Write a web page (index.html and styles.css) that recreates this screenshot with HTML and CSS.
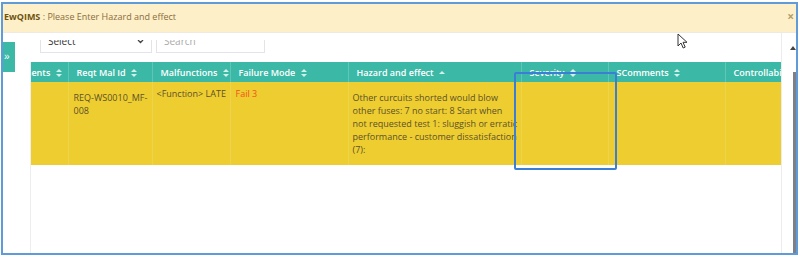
FILE: index.html
```html
<!DOCTYPE html>
<html lang="en">
<head>
    <meta charset="UTF-8">
    <meta name="viewport" content="width=device-width, initial-scale=1.0">
    <title>EwQIMS - Hazard Analysis</title>
    <link rel="stylesheet" href="styles.css">
</head>
<body>
    <div class="frame">
        <div class="page">
            <!-- side menu toggle -->
            <div class="sidebar">
                <button class="toggle">&raquo;</button>
            </div>

            <div class="main">
                <div class="filters">
                    <div class="select">
                        <span>Select</span>
                        <svg width="7" height="5" viewBox="0 0 7 5"><path d="M1 1l2.5 2.5L6 1" fill="none" stroke="#444" stroke-width="1.3"/></svg>
                    </div>
                    <div class="search">Search</div>
                </div>

                <div class="grid-wrap">
                    <table class="grid">
                        <colgroup>
                            <col style="width:87px">
                            <col style="width:84px">
                            <col style="width:78px">
                            <col style="width:118px">
                            <col style="width:173px">
                            <col style="width:87px">
                            <col style="width:117px">
                            <col style="width:110px">
                        </colgroup>
                        <thead>
                            <tr>
                                <th>Requirements <i class="sort"></i></th>
                                <th>Reqt Mal Id <i class="sort"></i></th>
                                <th>Malfunctions <i class="sort"></i></th>
                                <th>Failure Mode <i class="sort"></i></th>
                                <th>Hazard and effect <i class="sort asc"></i></th>
                                <th>Severity <i class="sort"></i></th>
                                <th>SComments <i class="sort"></i></th>
                                <th>Controllability <i class="sort"></i></th>
                            </tr>
                        </thead>
                        <tbody>
                            <tr class="warn">
                                <td></td>
                                <td class="id">REQ-WS0010_MF-008</td>
                                <td>&lt;Function&gt; LATE</td>
                                <td class="fail">Fail 3</td>
                                <td class="hazard">Other curcuits shorted would blow other fuses: 7 no start: 8 Start when not requested test 1: sluggish or erratic performance - customer dissatisfaction (7):</td>
                                <td></td>
                                <td></td>
                                <td></td>
                            </tr>
                        </tbody>
                    </table>
                </div>
            </div>

            <div class="scroll">
                <span class="arrow"></span>
                <span class="thumb"></span>
            </div>
        </div>

        <!-- validation message -->
        <div class="toast">
            <b>EwQIMS</b> : Please Enter Hazard and effect
            <span class="close">&times;</span>
        </div>

        <!-- cell selection -->
        <div class="marquee"></div>

        <svg class="cursor" width="11" height="16" viewBox="0 0 11 16">
            <path d="M1 1v12l3-3 2.2 5 2-0.9-2.2-4.8H10z" fill="#fff" stroke="#333" stroke-width="1" stroke-linejoin="round"/>
        </svg>
    </div>
</body>
</html>
```

FILE: styles.css
```css
body {
    margin: 0;
    background: #fff;
    font-family: "Open Sans", Arial, sans-serif;
    color: #333;
}
.frame {
    position: relative;
    margin: 2px 2px 0 1px;
    height: 249px;
    border: 2px solid #5f9bd8;
    overflow: hidden;
}
.page {
    display: flex;
    height: 100%;
}
.sidebar {
    width: 27px;
    flex: none;
}
.toggle {
    display: block;
    margin-top: 38px;
    width: 12px;
    height: 30px;
    padding: 0 0 0 1px;
    border: none;
    background: #3bb8a6;
    color: #fff;
    font-size: 10px;
    line-height: 30px;
    text-align: left;
}
.main {
    flex: 1;
    display: flex;
    flex-direction: column;
    border-right: 1px solid #ececec;
    min-width: 0;
}
.filters {
    display: flex;
    align-items: flex-end;
    gap: 4px;
    height: 13px;
    overflow: hidden;
    margin: 36px 0 9px;
    padding-left: 10px;
}
.select, .search {
    flex: none;
    height: 22px;
    border: 1px solid #e4e4e4;
    font-size: 10px;
    line-height: 23px;
    padding: 0 7px;
}
.select {
    width: 96px;
    display: flex;
    justify-content: space-between;
    align-items: center;
    color: #333;
}
.search {
    width: 93px;
    color: #aaa;
}
.grid-wrap {
    flex: 1;
    overflow: hidden;
    border-left: 1px solid #eeeeee;
}
.grid {
    border-collapse: collapse;
    table-layout: fixed;
    width: 854px;
    margin-left: -50px;
    font-size: 9px;
}
.grid th {
    height: 20px;
    padding: 0 0 0 8px;
    background: #3bb8a6;
    color: #fff;
    font-weight: 600;
    text-align: left;
    white-space: nowrap;
    overflow: hidden;
    border-right: 1px solid #5ec6b7;
}
.sort {
    display: inline-block;
    position: relative;
    width: 6px;
    height: 8px;
    margin-left: 3px;
    vertical-align: -1px;
}
.sort::before, .sort::after {
    content: "";
    position: absolute;
    left: 0;
    border-left: 3px solid transparent;
    border-right: 3px solid transparent;
}
.sort::before {
    top: 0;
    border-bottom: 3px solid #d3efea;
}
.sort::after {
    bottom: 0;
    border-top: 3px solid #d3efea;
}
.sort.asc::after {
    display: none;
}
.sort.asc::before {
    top: 2px;
}
.warn {
    height: 83px;
}
.grid td {
    padding: 5px 3px 0 4px;
    vertical-align: top;
    line-height: 13px;
    border-right: 1px solid #eed34f;
}
.warn td {
    background: #eecd31;
    color: #5c5128;
}
.grid td.id {
    padding-top: 9px;
    padding-left: 5px;
}
.grid td.fail {
    color: #f4501c;
    padding-left: 5px;
}
.grid td.hazard {
    vertical-align: middle;
    padding: 0 3px 0 4px;
}
.scroll {
    width: 14px;
    flex: none;
    position: relative;
}
.arrow {
    position: absolute;
    top: 42px;
    right: 0;
    border-left: 3px solid transparent;
    border-right: 3px solid transparent;
    border-bottom: 4px solid #444;
}
.thumb {
    position: absolute;
    top: 68px;
    bottom: 0;
    right: 0;
    width: 3px;
    background: #7d8088;
}
.toast {
    position: absolute;
    top: 0;
    left: 0;
    right: 0;
    height: 28px;
    padding-left: 1px;
    background: #fdefc8;
    border-bottom: 1px solid #efeae0;
    color: #8a6d3b;
    font-size: 9px;
    line-height: 25px;
}
.toast b {
    color: #6f5310;
    font-weight: 700;
}
.close {
    position: absolute;
    right: 2px;
    top: 0;
    color: #b29f6e;
    font-size: 12px;
    font-weight: 700;
}
.marquee {
    position: absolute;
    left: 511px;
    top: 68px;
    width: 99px;
    height: 94px;
    border: 2px solid #3a7fd5;
    border-radius: 2px;
}
.cursor {
    position: absolute;
    left: 674px;
    top: 29px;
}
```
